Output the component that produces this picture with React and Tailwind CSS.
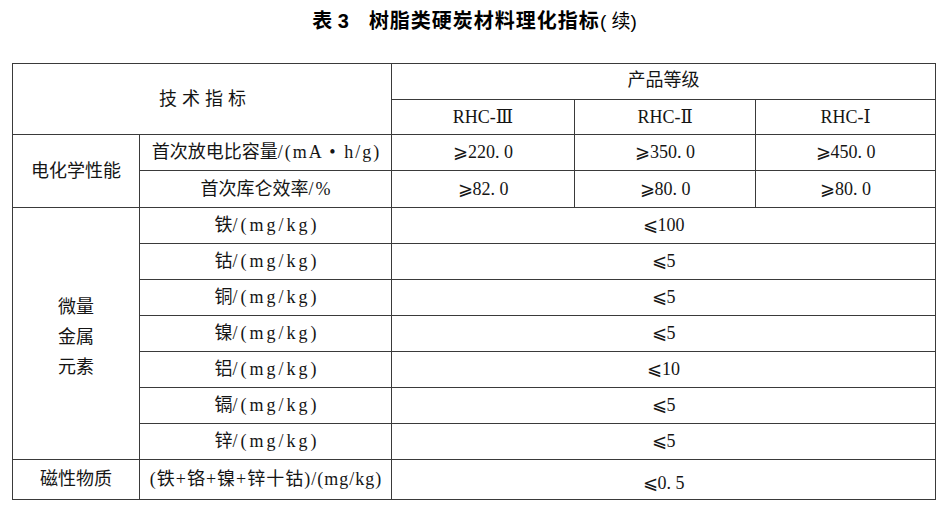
import React from "react";

const serif = { fontFamily: '"Liberation Serif", "DejaVu Serif", "Noto Sans CJK SC", serif' };

const metals = [
  { name: "铁", value: "⩽100" },
  { name: "钴", value: "⩽5" },
  { name: "铜", value: "⩽5" },
  { name: "镍", value: "⩽5" },
  { name: "铝", value: "⩽10" },
  { name: "镉", value: "⩽5" },
  { name: "锌", value: "⩽5" },
];

export default function App() {
  const cell = "border border-[#3a3a3a] text-center align-middle p-0 font-normal";

  return (
    <div className="w-[947px] h-[521px] bg-white text-[#151515] overflow-hidden" style={serif}>
      {/* TITLE */}
      <div className="pt-[9px] h-[63px] flex justify-center">
        <h1
          className="text-[20px] leading-[24px] font-bold text-black pl-[2px]"
          style={{ fontFamily: '"Liberation Sans", "Noto Sans CJK SC", sans-serif' }}
        >
          <span>表 3</span>
          <span className="ml-[20px] tracking-[1px]">树脂类硬炭材料理化指标</span>
          <span className="font-normal text-[19px]">( 续)</span>
        </h1>
      </div>

      {/* TABLE */}
      <div className="pl-[12px]">
        <table className="border-collapse table-fixed w-[923px] text-[18px] border-[1.5px] border-[#2a2a2a]">
          <colgroup>
            <col className="w-[127px]" />
            <col className="w-[252px]" />
            <col className="w-[183px]" />
            <col className="w-[181px]" />
            <col className="w-[180px]" />
          </colgroup>
          <tbody>
            <tr className="h-[36px]">
              <td colSpan={2} rowSpan={2} className={cell}>
                <span className="tracking-[5px] pl-[6px]">技术指标</span>
              </td>
              <td colSpan={3} className={`${cell} pb-[2px]`}>产品等级</td>
            </tr>
            <tr className="h-[35px]">
              <td className={cell}>RHC-Ⅲ</td>
              <td className={cell}>RHC-Ⅱ</td>
              <td className={cell}>RHC-Ⅰ</td>
            </tr>

            {/* 电化学性能 */}
            <tr className="h-[36px]">
              <td rowSpan={2} className={cell}>电化学性能</td>
              <td className={cell}>
                首次放电比容量<span className="tracking-[2px] mr-[-2px]">/(mA • h/g)</span>
              </td>
              <td className={cell}>⩾220. 0</td>
              <td className={cell}>⩾350. 0</td>
              <td className={cell}>⩾450. 0</td>
            </tr>
            <tr className="h-[37px]">
              <td className={cell}>
                首次库仑效率<span className="tracking-[2px] mr-[-2px]">/%</span>
              </td>
              <td className={cell}>⩾82. 0</td>
              <td className={cell}>⩾80. 0</td>
              <td className={cell}>⩾80. 0</td>
            </tr>

            {/* 微量金属元素 */}
            {metals.map((m, i) => (
              <tr key={m.name} className="h-[36px]">
                {i === 0 && (
                  <td rowSpan={metals.length} className={cell}>
                    <div className="leading-[30px] pt-[6px]">
                      微量
                      <br />
                      金属
                      <br />
                      元素
                    </div>
                  </td>
                )}
                <td className={cell}>
                  {m.name}
                  <span className="tracking-[3px] mr-[-3px]">/(mg/kg)</span>
                </td>
                <td colSpan={3} className={cell}>{m.value}</td>
              </tr>
            ))}

            {/* 磁性物质 */}
            <tr className="h-[40px]">
              <td className={cell}>磁性物质</td>
              <td className={cell}>
                <span className="tracking-[1px] mr-[-1px]">(铁+铬+镍+锌十钴)/(mg/kg)</span>
              </td>
              <td colSpan={3} className={`${cell} pt-[8px]`}>⩽0. 5</td>
            </tr>
          </tbody>
        </table>
      </div>
    </div>
  );
}
